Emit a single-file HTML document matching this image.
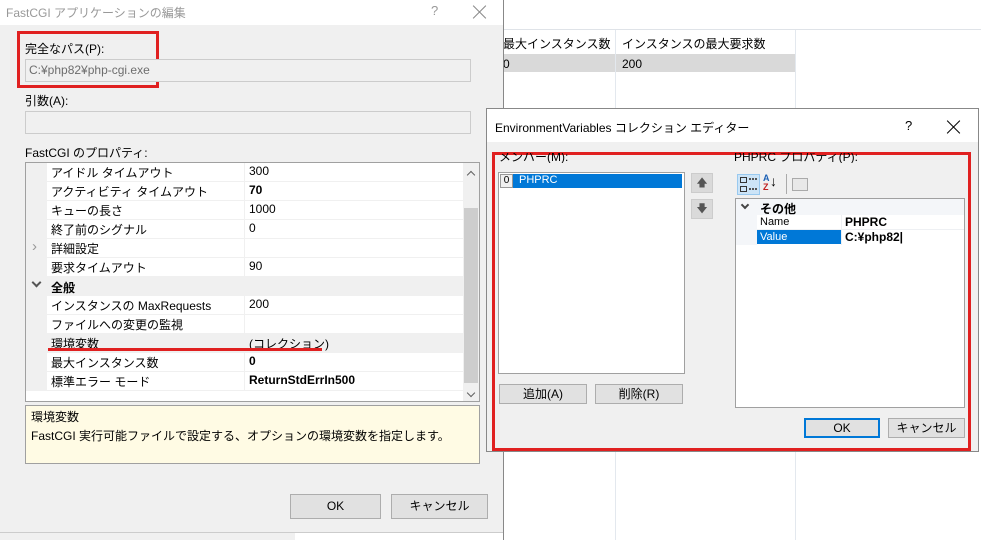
<!DOCTYPE html>
<html><head><meta charset="utf-8"><style>
*{box-sizing:border-box;margin:0;padding:0}
body{width:981px;height:540px;position:relative;overflow:hidden;background:#fff;font-family:"Liberation Sans","Noto Sans CJK JP",sans-serif;font-size:12px;color:#000}
.a{position:absolute;white-space:nowrap}
.btn{position:absolute;background:#e1e1e1;border:1px solid #adadad;text-align:center;font-size:12px}
.row{position:absolute;left:47px;width:416px;height:19px;border-bottom:1px solid #f0f0f0;background:#fff}
.row span{position:absolute;top:1px}
.row .n{left:4px}.row .v{left:202px}
.row:before{content:"";position:absolute;left:197px;top:0;bottom:0;border-left:1px solid #f0f0f0}
.x{position:absolute;width:14px;height:14px}
.x:before,.x:after{content:"";position:absolute;left:6px;top:-2px;width:1px;height:18px;background:currentColor;transform:rotate(45deg)}
.x:after{transform:rotate(-45deg)}
</style></head><body>
<div class="a" style="left:503px;top:29px;width:478px;height:1px;background:#dfe3e8"></div>
<div class="a" style="left:503px;top:54px;width:292px;height:18px;background:#d9d9d9"></div>
<div class="a" style="left:615px;top:30px;width:1px;height:510px;background:#e3e8ee"></div>
<div class="a" style="left:795px;top:30px;width:1px;height:510px;background:#e3e8ee"></div>
<div class="a" style="left:503px;top:35px">最大インスタンス数</div>
<div class="a" style="left:622px;top:35px">インスタンスの最大要求数</div>
<div class="a" style="left:503px;top:57px">0</div>
<div class="a" style="left:622px;top:57px">200</div>

<div class="a" style="left:0;top:0;width:504px;height:540px;background:#f0f0f0;border-right:1px solid #888"></div>
<div class="a" style="left:0;top:0;width:503px;height:25px;background:#fff"></div>
<div class="a" style="left:6px;top:4px;color:#999;font-size:12px">FastCGI アプリケーションの編集</div>
<div class="a" style="left:431px;top:3px;color:#999;font-size:13px">?</div>
<div class="x" style="left:473px;top:5px;color:#888"></div>
<div class="a" style="left:0;top:532px;width:503px;height:1px;background:#ccc"></div>
<div class="a" style="left:0;top:533px;width:295px;height:7px;background:#f0f0f0"></div>
<div class="a" style="left:295px;top:533px;width:208px;height:7px;background:#fff"></div>

<div class="a" style="left:17px;top:31px;width:142px;height:57px;border:3px solid #e02020"></div>
<div class="a" style="left:25px;top:40px">完全なパス(P):</div>
<div class="a" style="left:25px;top:59px;width:446px;height:23px;border:1px solid #ccc;background:#f0f0f0"></div>
<div class="a" style="left:29px;top:63px;color:#6d6d6d">C:¥php82¥php-cgi.exe</div>
<div class="a" style="left:25px;top:92px">引数(A):</div>
<div class="a" style="left:25px;top:111px;width:446px;height:23px;border:1px solid #ccc;background:#f0f0f0"></div>
<div class="a" style="left:25px;top:144px">FastCGI のプロパティ:</div>

<div class="a" style="left:25px;top:162px;width:455px;height:240px;border:1px solid #a0a0a0;background:#fff"></div>
<div class="a" style="left:26px;top:163px;width:21px;height:228px;background:#f0f0f0"></div>
<div class="row" style="top:163px"><span class="n">アイドル タイムアウト</span><span class="v">300</span></div>
<div class="row" style="top:182px"><span class="n">アクティビティ タイムアウト</span><span class="v" style="font-weight:bold">70</span></div>
<div class="row" style="top:201px"><span class="n">キューの長さ</span><span class="v">1000</span></div>
<div class="row" style="top:220px"><span class="n">終了前のシグナル</span><span class="v">0</span></div>
<div class="row" style="top:239px"><span class="n">詳細設定</span></div>
<div class="a" style="left:32px;top:238px;color:#999;font-size:15px">›</div>
<div class="row" style="top:258px"><span class="n">要求タイムアウト</span><span class="v">90</span></div>
<div class="a" style="left:26px;top:277px;width:437px;height:19px;background:#f0f0f0"></div>
<div class="a" style="left:33px;top:279px;width:7px;height:7px;border-right:2px solid #555;border-bottom:2px solid #555;transform:rotate(45deg)"></div>
<div class="a" style="left:51px;top:279px;font-weight:bold">全般</div>
<div class="row" style="top:296px"><span class="n">インスタンスの MaxRequests</span><span class="v">200</span></div>
<div class="row" style="top:315px"><span class="n">ファイルへの変更の監視</span></div>
<div class="row" style="top:334px;background:#f0f0f0"><span class="n">環境変数</span><span class="v">(コレクション)</span></div>
<div class="row" style="top:353px"><span class="n">最大インスタンス数</span><span class="v" style="font-weight:bold">0</span></div>
<div class="row" style="top:372px"><span class="n">標準エラー モード</span><span class="v" style="font-weight:bold">ReturnStdErrIn500</span></div>
<div class="a" style="left:48px;top:348px;width:274px;height:3px;background:#e02020"></div>
<div class="a" style="left:463px;top:163px;width:16px;height:238px;background:#f0f0f0"></div>
<div class="a" style="left:464px;top:208px;width:14px;height:175px;background:#cdcdcd"></div>
<div class="a" style="left:468px;top:172px;width:6px;height:6px;border-left:1.5px solid #606060;border-top:1.5px solid #606060;transform:rotate(45deg)"></div>
<div class="a" style="left:468px;top:390px;width:6px;height:6px;border-right:1.5px solid #606060;border-bottom:1.5px solid #606060;transform:rotate(45deg)"></div>

<div class="a" style="left:25px;top:405px;width:455px;height:59px;border:1px solid #a0a0a0;background:#fffbe4"></div>
<div class="a" style="left:31px;top:408px">環境変数</div>
<div class="a" style="left:31px;top:427px">FastCGI 実行可能ファイルで設定する、オプションの環境変数を指定します。</div>

<div class="btn" style="left:290px;top:494px;width:91px;height:25px;line-height:23px">OK</div>
<div class="btn" style="left:391px;top:494px;width:97px;height:25px;line-height:23px">キャンセル</div>

<div class="a" style="left:486px;top:108px;width:493px;height:344px;background:#f0f0f0;border:1px solid #888"></div>
<div class="a" style="left:487px;top:109px;width:491px;height:33px;background:#fff"></div>
<div class="a" style="left:495px;top:119px">EnvironmentVariables コレクション エディター</div>
<div class="a" style="left:905px;top:118px;font-size:13px">?</div>
<div class="x" style="left:947px;top:120px;color:#000"></div>
<div class="a" style="left:492px;top:152px;width:479px;height:299px;border:3px solid #e02020"></div>
<div class="a" style="left:499px;top:153px;height:10px;overflow:hidden;line-height:9px">メンバー(M):</div>
<div class="a" style="left:734px;top:153px;height:10px;overflow:hidden;line-height:9px">PHPRC プロパティ(P):</div>
<div class="a" style="left:498px;top:172px;width:187px;height:202px;border:1px solid #a0a0a0;background:#fff"></div>
<div class="a" style="left:500px;top:174px;width:182px;height:14px;background:#0078d7"></div>
<div class="a" style="left:500px;top:174px;width:13px;height:14px;background:#f0f0f0;border:1px solid #999;font-size:10px;text-align:center;line-height:12px">0</div>
<div class="a" style="left:519px;top:174px;color:#fff;font-size:11px">PHPRC</div>
<div class="btn" style="left:691px;top:173px;width:22px;height:20px;background:#dadada;border-color:#ccc;color:#555;line-height:18px;font-size:11px">🡅</div>
<div class="btn" style="left:691px;top:199px;width:22px;height:20px;background:#dadada;border-color:#ccc;color:#555;line-height:18px;font-size:11px">🡇</div>
<div class="btn" style="left:499px;top:384px;width:88px;height:20px;line-height:18px">追加(A)</div>
<div class="btn" style="left:595px;top:384px;width:88px;height:20px;line-height:18px">削除(R)</div>
<div class="a" style="left:737px;top:174px;width:23px;height:21px;background:#cce4f7;border:1px solid #99c9ef"></div>
<div class="a" style="left:740px;top:177px;width:7px;height:6px;border:1px solid #333"></div>
<div class="a" style="left:740px;top:186px;width:7px;height:6px;border:1px solid #333"></div>
<div class="a" style="left:749px;top:178px;width:8px;height:12px;border-top:2px dotted #555;border-bottom:2px dotted #555"></div>
<div class="a" style="left:763px;top:174px;font-size:9px;line-height:9px;color:#1a5fb4;font-weight:bold">A<br><span style="color:#c02020">Z</span></div>
<div class="a" style="left:770px;top:173px;font-size:14px">↓</div>
<div class="a" style="left:786px;top:174px;width:1px;height:20px;background:#aaa"></div>
<div class="a" style="left:792px;top:178px;width:16px;height:13px;border:1px solid #aaa;background:#e8e8e8"></div>
<div class="a" style="left:735px;top:198px;width:230px;height:210px;border:1px solid #a0a0a0;background:#fff"></div>
<div class="a" style="left:736px;top:199px;width:228px;height:16px;background:#f4f6f9"></div>
<div class="a" style="left:736px;top:215px;width:21px;height:30px;background:#f4f6f9"></div>
<div class="a" style="left:742px;top:202px;width:6px;height:6px;border-right:2px solid #444;border-bottom:2px solid #444;transform:rotate(45deg)"></div>
<div class="a" style="left:760px;top:200px;font-weight:bold">その他</div>
<div class="a" style="left:757px;top:229px;width:207px;height:1px;background:#eef0f3"></div>
<div class="a" style="left:841px;top:215px;width:1px;height:30px;background:#eef0f3"></div>
<div class="a" style="left:760px;top:216px;font-size:11px">Name</div>
<div class="a" style="left:845px;top:215px;font-weight:bold">PHPRC</div>
<div class="a" style="left:757px;top:230px;width:84px;height:14px;background:#0078d7"></div>
<div class="a" style="left:760px;top:231px;font-size:11px;color:#fff">Value</div>
<div class="a" style="left:845px;top:230px;font-weight:bold">C:¥php82|</div>
<div class="btn" style="left:804px;top:418px;width:76px;height:20px;line-height:16px;border:2px solid #0078d7">OK</div>
<div class="btn" style="left:888px;top:418px;width:77px;height:20px;line-height:18px">キャンセル</div>
</body></html>
